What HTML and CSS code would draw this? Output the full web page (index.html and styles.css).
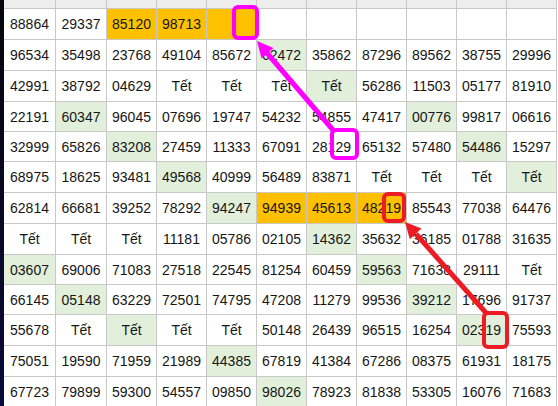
FILE: index.html
```html
<!DOCTYPE html>
<html>
<head>
<meta charset="utf-8">
<link rel="stylesheet" href="styles.css">
</head>
<body>
<div class="page">
  <div class="strip"></div>
  <div class="sheet">
    <div class="c h"></div><div class="c h"></div><div class="c h"></div><div class="c h"></div><div class="c h"></div><div class="c h"></div><div class="c h"></div><div class="c h"></div><div class="c h"></div><div class="c h"></div><div class="c h"></div>

    <div class="c">88864</div><div class="c">29337</div><div class="c o">85120</div><div class="c o">98713</div><div class="c o"></div><div class="c"></div><div class="c"></div><div class="c"></div><div class="c"></div><div class="c"></div><div class="c"></div>

    <div class="c">96534</div><div class="c">35498</div><div class="c">23768</div><div class="c">49104</div><div class="c">85672</div><div class="c g">62472</div><div class="c">35862</div><div class="c">87296</div><div class="c">89562</div><div class="c">38755</div><div class="c">29996</div>

    <div class="c">42991</div><div class="c">38792</div><div class="c">04629</div><div class="c">Tết</div><div class="c">Tết</div><div class="c">Tết</div><div class="c g">Tết</div><div class="c">56286</div><div class="c">11503</div><div class="c">05177</div><div class="c">81910</div>

    <div class="c">22191</div><div class="c g">60347</div><div class="c">96045</div><div class="c">07696</div><div class="c">19747</div><div class="c">54232</div><div class="c">54855</div><div class="c">47417</div><div class="c g">00776</div><div class="c">99817</div><div class="c">06616</div>

    <div class="c">32999</div><div class="c">65826</div><div class="c g">83208</div><div class="c">27459</div><div class="c">11333</div><div class="c">67091</div><div class="c">28129</div><div class="c">65132</div><div class="c">57480</div><div class="c g">54486</div><div class="c">15297</div>

    <div class="c">68975</div><div class="c">18625</div><div class="c">93481</div><div class="c g">49568</div><div class="c">40999</div><div class="c">56489</div><div class="c">83871</div><div class="c">Tết</div><div class="c">Tết</div><div class="c">Tết</div><div class="c g">Tết</div>

    <div class="c">62814</div><div class="c">66681</div><div class="c">39252</div><div class="c">78292</div><div class="c g">94247</div><div class="c o">94939</div><div class="c o">45613</div><div class="c o">48219</div><div class="c">85543</div><div class="c">77038</div><div class="c">64476</div>

    <div class="c">Tết</div><div class="c">Tết</div><div class="c">Tết</div><div class="c">11181</div><div class="c">05786</div><div class="c">02105</div><div class="c g">14362</div><div class="c">35632</div><div class="c">36185</div><div class="c">01788</div><div class="c">31635</div>

    <div class="c g">03607</div><div class="c">69006</div><div class="c">71083</div><div class="c">27518</div><div class="c">22545</div><div class="c">81254</div><div class="c">60459</div><div class="c g">59563</div><div class="c">71638</div><div class="c">29111</div><div class="c">Tết</div>

    <div class="c">66145</div><div class="c g">05148</div><div class="c">63229</div><div class="c">72501</div><div class="c">74795</div><div class="c">47208</div><div class="c">11279</div><div class="c">99536</div><div class="c g">39212</div><div class="c">17696</div><div class="c">91737</div>

    <div class="c">55678</div><div class="c">Tết</div><div class="c g">Tết</div><div class="c">Tết</div><div class="c">Tết</div><div class="c">50148</div><div class="c">26439</div><div class="c">96515</div><div class="c">16254</div><div class="c g">02319</div><div class="c">75593</div>

    <div class="c">75051</div><div class="c">19590</div><div class="c">71959</div><div class="c">21989</div><div class="c g">44385</div><div class="c">67819</div><div class="c">41384</div><div class="c">67286</div><div class="c">08375</div><div class="c">61931</div><div class="c">18175</div>

    <div class="c">67723</div><div class="c">79899</div><div class="c">59300</div><div class="c">54557</div><div class="c">09850</div><div class="c g">98026</div><div class="c">78923</div><div class="c">81838</div><div class="c">53305</div><div class="c">16076</div><div class="c">71683</div>
  </div>
  <svg class="marks" width="558" height="406" viewBox="0 0 558 406">
    <g fill="none" stroke-linejoin="round">
      <rect x="234" y="7" width="23" height="31" rx="4" stroke="#ff00ff" stroke-width="4"/>
      <rect x="332" y="130" width="25" height="28" rx="4" stroke="#ff00ff" stroke-width="4"/>
      <line x1="333" y1="130" x2="267" y2="53" stroke="#ff00ff" stroke-width="5"/>
      <rect x="384" y="194" width="20" height="27" rx="4" stroke="#ed1c24" stroke-width="4"/>
      <rect x="484" y="313" width="23" height="34" rx="4" stroke="#ed1c24" stroke-width="4"/>
      <line x1="487" y1="314" x2="416" y2="234" stroke="#ed1c24" stroke-width="5"/>
    </g>
    <polygon points="257,41 273.5,48 261.5,58.5" fill="#ff00ff"/>
    <polygon points="405,222 421.5,228.5 409.8,239.2" fill="#ed1c24"/>
  </svg>
</div>
</body>
</html>
```

FILE: styles.css
```css
html, body {
  margin: 0;
  padding: 0;
  background: #ffffff;
}

.page {
  position: relative;
  display: flex;
  width: 558px;
  height: 406px;
  overflow: hidden;
  font-family: "Liberation Sans", Arial, sans-serif;
  font-size: 14px;
  color: #161616;
}

.strip {
  width: 4px;
  flex: none;
  background: linear-gradient(#06060c, #0a0a3c);
}

.sheet {
  display: grid;
  grid-template-columns: 51px 50px repeat(9, 49px);
  grid-template-rows: 8px 30px 30px 30px 29px 29px 30px 30px 30px 29px 29px 30px 30px 30px;
  gap: 1px;
  padding-right: 1px;
  background: #c8c8c8;
  align-self: flex-start;
}

.c {
  background: #ffffff;
  display: flex;
  align-items: center;
  justify-content: center;
  white-space: nowrap;
  overflow: hidden;
}

.h {
  background: #ededed;
}

.g {
  background: #e2efda;
}

.o {
  background: #ffc000;
}

.marks {
  position: absolute;
  left: 0;
  top: 0;
  pointer-events: none;
}
```
